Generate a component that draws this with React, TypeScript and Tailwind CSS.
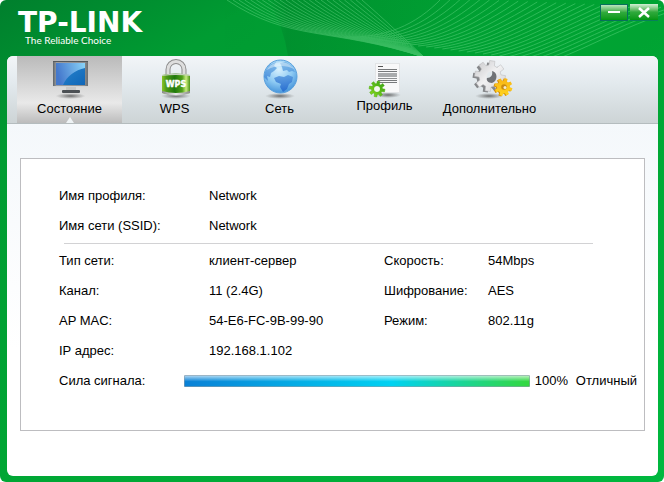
import React, { useState } from 'react';

// toothed wheel outline around (cx, cy)
const gearPath = (cx: number, cy: number, outer: number, inner: number, teeth: number, turn = 0) => {
  const step = (Math.PI * 2) / teeth;
  const points: string[] = [];
  for (let i = 0; i < teeth; i++) {
    const a = i * step + turn;
    [
      [inner, -0.32],
      [outer, -0.22],
      [outer, 0.22],
      [inner, 0.32],
    ].forEach(([r, k]) => {
      points.push(`${(cx + r * Math.cos(a + k * step)).toFixed(2)} ${(cy + r * Math.sin(a + k * step)).toFixed(2)}`);
    });
  }
  return `M${points.join('L')}Z`;
};

const circlePath = (cx: number, cy: number, r: number) =>
  `M${cx - r} ${cy}a${r} ${r} 0 1 0 ${r * 2} 0a${r} ${r} 0 1 0 ${-r * 2} 0Z`;

const IconDefs = () => (
  <svg width="0" height="0" className="absolute" aria-hidden="true">
    <defs>
      <radialGradient id="shadow">
        <stop offset="0" stopColor="#444" stopOpacity="0.75" />
        <stop offset="1" stopColor="#666" stopOpacity="0" />
      </radialGradient>
      <linearGradient id="frame">
        <stop offset="0" stopColor="#5f6468" />
        <stop offset="0.1" stopColor="#9a9da0" />
        <stop offset="0.9" stopColor="#8b8e91" />
        <stop offset="1" stopColor="#6c6f72" />
      </linearGradient>
      <linearGradient id="screen" x1="0" y1="0" x2="1" y2="1">
        <stop offset="0" stopColor="#2f8ad0" />
        <stop offset="1" stopColor="#0f66b8" />
      </linearGradient>
      <linearGradient id="glare" x1="0" y1="0.2" x2="1" y2="0">
        <stop offset="0" stopColor="#4478cc" />
        <stop offset="1" stopColor="#8ad4f8" />
      </linearGradient>
      <linearGradient id="lock">
        <stop offset="0" stopColor="#8cc428" />
        <stop offset="0.15" stopColor="#4f9a18" />
        <stop offset="0.45" stopColor="#1f780c" />
        <stop offset="0.72" stopColor="#4fa018" />
        <stop offset="0.86" stopColor="#c8ec80" />
        <stop offset="1" stopColor="#4b9414" />
      </linearGradient>
      <linearGradient id="steel">
        <stop offset="0" stopColor="#8a8a8a" />
        <stop offset="0.5" stopColor="#e8e8e8" />
        <stop offset="1" stopColor="#8a8a8a" />
      </linearGradient>
      <radialGradient id="globe" cx="0.45" cy="0.28" r="0.75">
        <stop offset="0" stopColor="#d8f0fd" />
        <stop offset="0.55" stopColor="#8ecaf3" />
        <stop offset="1" stopColor="#3f8fd8" />
      </radialGradient>
      <linearGradient id="land" x1="0" y1="0" x2="0" y2="1">
        <stop offset="0" stopColor="#6fb2e6" />
        <stop offset="1" stopColor="#1e62cc" />
      </linearGradient>
      <linearGradient id="greenGear" x1="1" y1="0" x2="0" y2="1">
        <stop offset="0" stopColor="#2f9e14" />
        <stop offset="1" stopColor="#8fdc1e" />
      </linearGradient>
      <linearGradient id="grayGear" x1="0" y1="0" x2="1" y2="1">
        <stop offset="0" stopColor="#c6c6c8" />
        <stop offset="0.5" stopColor="#f1f1f2" />
        <stop offset="1" stopColor="#cfcfd1" />
      </linearGradient>
      <linearGradient id="goldGear" x1="0" y1="0" x2="0" y2="1">
        <stop offset="0" stopColor="#f8b414" />
        <stop offset="1" stopColor="#ffd420" />
      </linearGradient>
    </defs>
  </svg>
);

const MonitorIcon = () => (
  <svg width="40" height="43" viewBox="0 0 40 43" aria-hidden="true">
    <ellipse cx="20.500" cy="38" rx="15" ry="3" fill="url(#shadow)" />
    <path d="M16 29h10v6H16z" fill="#c8c8c8" />
    <rect x="12" y="32" width="18" height="3" rx="1" fill="#4c5054" />
    <path d="M13 35h16l-1 1H14z" fill="#d8d8d8" />
    <rect x="3" y="3" width="35" height="26" fill="url(#frame)" />
    <path d="M3 3h35v1H3z" fill="#55595c" />
    <path d="M3 28h35v1H3z" fill="#d2d4d6" />
    <rect x="6" y="5" width="29" height="22" fill="url(#screen)" />
    <path d="M6 5h29v5C25 12 17 18 13 27H6z" fill="url(#glare)" />
  </svg>
);

const LockIcon = () => (
  <svg width="40" height="43" viewBox="0 0 40 43" aria-hidden="true">
    <ellipse cx="21" cy="38" rx="15" ry="3" fill="url(#shadow)" />
    <path d="M13 19v-7.500a7.500 7.500 0 0 1 16 0V19" fill="none" stroke="#8d8d8d" strokeWidth="5" />
    <path d="M13 19v-7.500a7.500 7.500 0 0 1 16 0V19" fill="none" stroke="#dedede" strokeWidth="3" />
    <path d="M7 17q14-3 28 0v18q-14 4-28 0z" fill="url(#lock)" />
    <path d="M7 17q14-3 28 0v1q-14-2-28 0z" fill="#c4cfbc" />
    <path d="M7 33q14 4 28 0v2q-14 5-28 0z" fill="url(#steel)" />
    <text
      x="21"
      y="29"
      textAnchor="middle"
      fill="#fff"
      stroke="#fff"
      strokeWidth="0.400"
      fontSize="8"
      fontWeight="700"
      fontFamily="DejaVu Sans, sans-serif"
    >
      WPS
    </text>
  </svg>
);

const GlobeIcon = () => (
  <svg width="40" height="43" viewBox="0 0 40 43" aria-hidden="true">
    <ellipse cx="20" cy="38" rx="15" ry="3" fill="url(#shadow)" />
    <circle cx="20.500" cy="18.500" r="16.500" fill="url(#globe)" stroke="#5aa0dc" />
    <path
      d="M5 14 9 7l7-3-2 4 3 2-3 3-3 2-1 4-3-1 1 5-4-4zM20 5l6-1 6 4 3 6-3-1-3 1-2-2-4 1-1-4zM14 20l5-2 5 1 4-2 5 2-1 5-3 2-2 5-4 3-3-5 1-3-5-2z"
      fill="url(#land)"
      opacity="0.8"
    />
    <path d="M7 12C10 4 26 0 34 11 26 7 15 7 7 12z" fill="#fff" opacity="0.4" />
  </svg>
);

const ProfileIcon = () => (
  <svg width="40" height="40" viewBox="0 0 40 40" aria-hidden="true">
    <ellipse cx="23" cy="37" rx="13" ry="3" fill="url(#shadow)" />
    <rect x="10.500" y="5.500" width="24" height="29" fill="#f8f8f9" stroke="#e2e4e6" />
    <path d="M13 8.500h5" stroke="#555" />
    <path d="M13 11.500h19M13 13.500h19M13 22.500h19M13 24.500h19" stroke="#77797b" />
    <path d="M13 15h19v4H13z" fill="#a9abad" />
    <path d="M13 20.500h19" stroke="#8d8f91" />
    <path
      d={gearPath(12, 31, 8, 5.5, 8, 0.2) + circlePath(12, 31, 3)}
      fill="url(#greenGear)"
      fillRule="evenodd"
      stroke="#4eae12"
      strokeWidth="0.500"
    />
    <circle cx="12" cy="31" r="2.800" fill="#f4f8f0" />
  </svg>
);

const GearsIcon = () => (
  <svg width="40" height="43" viewBox="0 0 40 43" overflow="visible" aria-hidden="true">
    <ellipse cx="19" cy="38" rx="14" ry="3" fill="url(#shadow)" />
    <path d={gearPath(17.5, 19.5, 15, 11, 8, 0.15)} fill="#85878a" />
    <path d={gearPath(20, 18, 15.5, 11, 8, 0.15)} fill="url(#grayGear)" stroke="#b4b4b6" strokeWidth="0.500" />
    <ellipse cx="21" cy="19" rx="4.500" ry="5.500" fill="#e3e9ec" />
    <path d="M22 13c6 1 6 10 0 12-4 0-6-3-5-5 4 0 6-3 5-7z" fill="#707276" />
    <path d={gearPath(32.5, 29.5, 9, 6.5, 8, 0.3)} fill="#d28a05" />
    <path d={gearPath(33.5, 29, 9, 6.5, 8, 0.3)} fill="url(#goldGear)" />
    <circle cx="34" cy="29" r="2.800" fill="#c98a10" />
    <circle cx="35" cy="29.500" r="1.500" fill="#f4ecd0" />
  </svg>
);

const mix = (a: number, b: number, t: number) => (a + (b - a) * t).toFixed(1);

const HeaderWaves = () => (
  <svg className="absolute inset-0 h-full w-full" viewBox="0 0 664 56" preserveAspectRatio="xMidYMid slice" aria-hidden="true">
    <defs>
      <linearGradient id="fold">
        <stop offset="0" stopColor="#006a22" stopOpacity="0" />
        <stop offset="0.1" stopColor="#006a22" stopOpacity="0.250" />
        <stop offset="1" stopColor="#006a22" stopOpacity="0" />
      </linearGradient>
    </defs>
    <path d="M268 0h190v56H288Q284 28 268 0z" fill="url(#fold)" />
    <g fill="none" stroke="#8ff0a8" strokeWidth="0.800" opacity="0.400">
      {Array.from({ length: 24 }, (_, i) => {
        const t = i / 23;
        return (
          <path
            key={i}
            d={`M${mix(227, 362, t)} 0C${mix(290, 384, t)} ${mix(42, 19, t)} ${mix(330, 404, t)} ${mix(27, 38, t)} 424 57`}
          />
        );
      })}
      {Array.from({ length: 26 }, (_, i) => {
        const t = i / 25;
        return (
          <path
            key={i}
            d={`M${mix(345, 548, t)} ${mix(37, 62, t)}C${mix(385, 585, t)} ${mix(38, 50, t)} ${mix(415, 615, t)} ${mix(26, 30, t)} ${mix(442, 680, t)} ${mix(-2, 8, t)}`}
          />
        );
      })}
    </g>
  </svg>
);

const tabs = [
  { name: 'Состояние', icon: <MonitorIcon /> },
  { name: 'WPS', icon: <LockIcon /> },
  { name: 'Сеть', icon: <GlobeIcon /> },
  { name: 'Профиль', icon: <ProfileIcon /> },
  { name: 'Дополнительно', icon: <GearsIcon /> },
];

const profileRows = [
  ['Имя профиля:', 'Network'],
  ['Имя сети (SSID):', 'Network'],
];

const networkRows = [
  ['Тип сети:', 'клиент-сервер', 'Скорость:', '54Mbps'],
  ['Канал:', '11 (2.4G)', 'Шифрование:', 'AES'],
  ['AP MAC:', '54-E6-FC-9B-99-90', 'Режим:', '802.11g'],
  ['IP адрес:', '192.168.1.102'],
];

const InfoTable: React.FC<{ rows: string[][] }> = ({ rows }) => (
  <table className="w-full table-fixed text-left">
    <colgroup>
      <col className="w-[150px]" />
      <col className="w-[175px]" />
      <col className="w-[104px]" />
      <col />
    </colgroup>
    <tbody>
      {rows.map(([label, value, label2, value2]) => (
        <tr key={label} className="h-[30px]">
          <th scope="row" className="font-normal">{label}</th>
          <td>{value}</td>
          {label2 && <th scope="row" className="font-normal">{label2}</th>}
          {value2 && <td>{value2}</td>}
        </tr>
      ))}
    </tbody>
  </table>
);

const App: React.FC = () => {
  const [active, setActive] = useState('Состояние');
  const signal = 100;

  return (
    <div className="bg-white font-['Liberation_Sans',Arial,sans-serif] text-black">
      <IconDefs />
      <div className="flex min-h-screen flex-col overflow-hidden rounded-md bg-[linear-gradient(150deg,#007f2d_0%,#009c32_18%,#00a634_55%,#00b83f_100%)] pb-[6px]">
        <header className="relative flex h-14 shrink-0 items-start justify-between pr-[6px] pl-[18px]">
          <HeaderWaves />
          <div className="relative pt-[10px] text-white">
            <h1 className="font-['DejaVu_Sans',sans-serif] text-[28px] leading-[26px] font-bold">TP-LINK</h1>
            <p className="pl-[7px] font-['Lato',sans-serif] text-[10px] leading-[8px]">The Reliable Choice</p>
          </div>
          <div className="relative flex gap-[2px] pt-1">
            <button
              type="button"
              aria-label="Свернуть"
              className="flex h-[17px] w-7 items-center justify-center border border-[#08705c] bg-linear-to-b from-[#b8e6bd] via-[#2faa3c] via-50% to-[#009612]"
            >
              <svg width="12" height="3"><path d="M0 0h12v2H0z" fill="#fff" /></svg>
            </button>
            <button
              type="button"
              aria-label="Закрыть"
              className="flex h-[17px] w-7 items-center justify-center border-b border-[#08805c] bg-linear-to-b from-[#d2efd5] via-[#2faa3c] via-50% to-[#009612]"
            >
              <svg width="12" height="11"><path d="M1 1l10 9M11 1L1 10" stroke="#fff" strokeWidth="2.500" /></svg>
            </button>
          </div>
        </header>

        <div className="mr-[6px] ml-[7px] flex grow flex-col overflow-hidden rounded-md bg-linear-to-b from-[#f1f6fa] to-white to-70%">
          <nav className="flex h-[68px] shrink-0 border-b border-[#b4bcbe] bg-linear-to-b from-[#f2f5f8] via-[#e3eaee] via-40% to-[#cdd4d6] pl-[10px]">
            {tabs.map((tab) => (
              <button
                key={tab.name}
                type="button"
                onClick={() => setActive(tab.name)}
                className={`relative flex w-[105px] flex-col items-center pt-[2px] text-[13px] leading-4 whitespace-nowrap ${
                  active === tab.name ? 'bg-linear-to-b from-[#bababa] via-[#e9e9e9] via-70% to-[#bcbcbc]' : ''
                }`}
              >
                {tab.icon}
                {tab.name}
                {active === tab.name && (
                  <svg className="absolute bottom-0" width="8" height="6" aria-hidden="true">
                    <path d="M0 6l4-6 4 6z" fill="#eef3f5" />
                  </svg>
                )}
              </button>
            ))}
          </nav>

          <main className="mx-[13px] mt-[34px] mb-[45px] grow border border-[#bdbdc0] bg-white pt-[22px] pr-[7px] pl-[38px] text-[13px]">
            <InfoTable rows={profileRows} />
            <hr className="mt-[2px] mr-[44px] mb-[2px] ml-[5px] border-[#d2d2d4]" />
            <InfoTable rows={networkRows} />
            <div className="flex h-[30px] items-center">
              <span id="signal" className="w-[125px] shrink-0">Сила сигнала:</span>
              <div
                role="meter"
                aria-labelledby="signal"
                aria-valuemin={0}
                aria-valuemax={100}
                aria-valuenow={signal}
                className="h-3 grow"
              >
                <div
                  className="h-full rounded-[1px] border border-[#8c9ca8]/60 bg-[linear-gradient(to_bottom,rgba(255,255,255,0.75),rgba(255,255,255,0)_55%),linear-gradient(to_right,#0a80d6,#00d2f2_60%,#34d83e)] bg-origin-border"
                  style={{ width: `${signal}%` }}
                />
              </div>
              <span className="w-[46px] shrink-0 pl-[5px]">{signal}%</span>
              <span className="shrink-0">Отличный</span>
            </div>
          </main>
        </div>
      </div>
    </div>
  );
};

export default App;
